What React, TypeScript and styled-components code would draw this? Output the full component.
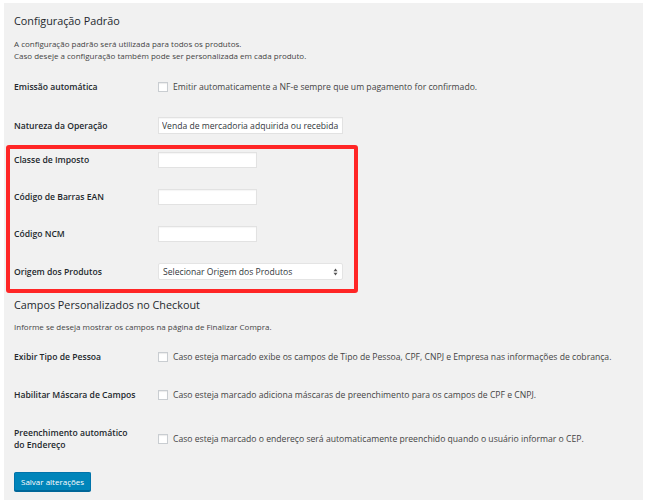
import styled, { createGlobalStyle } from "styled-components";

const GlobalStyle = createGlobalStyle`
  html, body {
    margin: 0;
    padding: 0;
    background: #ffffff;
  }
  body {
    font-family: "Open Sans", "Noto Sans", "Liberation Sans", sans-serif;
    color: #23282d;
  }
  * {
    box-sizing: border-box;
  }
`;

const Page = styled.div`
  padding: 3px 5px 3px 4px;
`;

const Panel = styled.main`
  background: #f1f1f1;
  height: 497px;
  padding: 11px 10px 9px 10px;
`;

const Heading = styled.h2<{ $top?: number }>`
  margin: ${(p) => p.$top ?? 0}px 0 0;
  font-size: 10.8px;
  line-height: 14px;
  font-weight: 400;
  color: #23282d;
`;

const Description = styled.p<{ $top: number }>`
  margin: ${(p) => p.$top}px 0 0;
  font-size: 8px;
  line-height: 12px;
  color: #444;
`;

const FormTable = styled.div<{ $top: number; $gap: number }>`
  display: grid;
  grid-template-columns: 144px 1fr;
  align-items: center;
  row-gap: ${(p) => p.$gap}px;
  margin-top: ${(p) => p.$top}px;
`;

const Highlight = styled.div`
  width: 352px;
  margin: 11px 0 0 -8px;
  padding: 3px 11px 9px 4px;
  border: 4px solid #ff2626;
  border-radius: 3px;
`;

const Label = styled.label`
  font-size: 8.6px;
  line-height: 12px;
  font-weight: 600;
  color: #23282d;
`;

const CheckRow = styled.div`
  display: flex;
  align-items: center;
  gap: 5px;
  font-size: 8.65px;
  line-height: 12px;
  color: #444;
  white-space: nowrap;
`;

const Checkbox = styled.span`
  width: 10px;
  height: 10px;
  flex-shrink: 0;
  background: #fff;
  border: 1px solid #c9cdd1;
  box-shadow: inset 0 1px 1px rgba(0, 0, 0, 0.08);
`;

const TextInput = styled.input<{ $width: number; $height?: number }>`
  width: ${(p) => p.$width}px;
  height: ${(p) => p.$height ?? 16}px;
  margin: 0;
  padding: 0 3px;
  border: 1px solid #e2e2e2;
  background: #fff;
  box-shadow: inset 0 1px 1px rgba(0, 0, 0, 0.04);
  font-family: inherit;
  font-size: 8.6px;
  color: #32373c;
  outline: none;
`;

const SelectBox = styled.div`
  width: 185px;
  height: 17px;
  display: flex;
  align-items: center;
  justify-content: space-between;
  padding: 0 4px 0 4px;
  background: #fff;
  border: 1px solid #e4e4e4;
  border-radius: 2px;
  font-size: 8.6px;
  color: #32373c;
`;

const Button = styled.button`
  height: 19px;
  padding: 0 6px;
  margin-top: 21px;
  background: #0085ba;
  border: 1px solid #0073aa;
  border-bottom-color: #006799;
  border-radius: 2px;
  box-shadow: 0 1px 0 #006799;
  color: #fff;
  font-family: inherit;
  font-size: 8px;
  cursor: pointer;
`;

function SortArrows() {
  return (
    <svg width="5" height="8" viewBox="0 0 5 8">
      <path d="M2.5 0.5 L4.5 3.2 H0.5 Z" fill="#555" />
      <path d="M2.5 7.5 L4.5 4.8 H0.5 Z" fill="#555" />
    </svg>
  );
}

export default function App() {
  return (
    <Page>
      <GlobalStyle />
      <Panel>
        <Heading>Configuração Padrão</Heading>
        <Description $top={10}>
          A configuração padrão será utilizada para todos os produtos.
          <br />
          Caso deseje a configuração também pode ser personalizada em cada produto.
        </Description>

        <FormTable $top={19} $gap={24}>
          <Label>Emissão automática</Label>
          <CheckRow>
            <Checkbox />
            Emitir automaticamente a NF-e sempre que um pagamento for confirmado.
          </CheckRow>
          <Label>Natureza da Operação</Label>
          <TextInput
            $width={185}
            $height={17}
            defaultValue="Venda de mercadoria adquirida ou recebida"
          />
        </FormTable>

        <Highlight>
          <FormTable $top={0} $gap={21}>
            <Label>Classe de Imposto</Label>
            <TextInput $width={99} />
            <Label>Código de Barras EAN</Label>
            <TextInput $width={99} />
            <Label>Código NCM</Label>
            <TextInput $width={99} />
            <Label>Origem dos Produtos</Label>
            <SelectBox>
              Selecionar Origem dos Produtos
              <SortArrows />
            </SelectBox>
          </FormTable>
        </Highlight>

        <Heading $top={5}>Campos Personalizados no Checkout</Heading>
        <Description $top={9}>
          Informe se deseja mostrar os campos na página de Finalizar Compra.
        </Description>

        <FormTable $top={18} $gap={26}>
          <Label>Exibir Tipo de Pessoa</Label>
          <CheckRow>
            <Checkbox />
            Caso esteja marcado exibe os campos de Tipo de Pessoa, CPF, CNPJ e Empresa nas informações de cobrança.
          </CheckRow>
          <Label>Habilitar Máscara de Campos</Label>
          <CheckRow>
            <Checkbox />
            Caso esteja marcado adiciona máscaras de preenchimento para os campos de CPF e CNPJ.
          </CheckRow>
          <Label>
            Preenchimento automático
            <br />
            do Endereço
          </Label>
          <CheckRow>
            <Checkbox />
            Caso esteja marcado o endereço será automaticamente preenchido quando o usuário informar o CEP.
          </CheckRow>
        </FormTable>

        <Button>Salvar alterações</Button>
      </Panel>
    </Page>
  );
}
